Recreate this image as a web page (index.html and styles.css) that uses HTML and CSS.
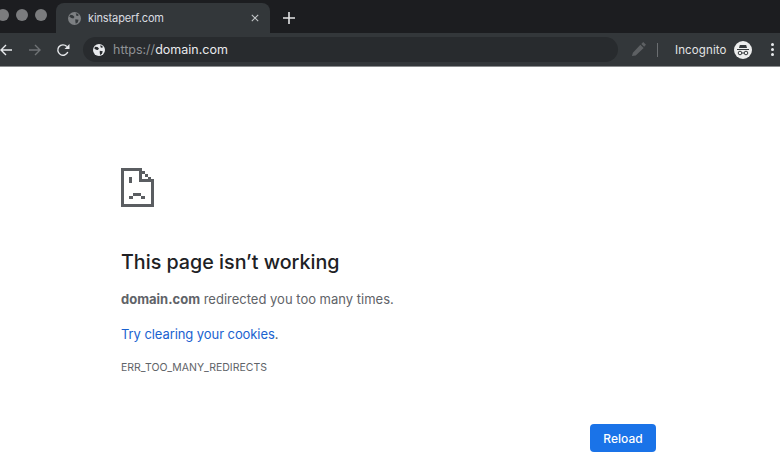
FILE: index.html
```html
<!DOCTYPE html>
<html lang="en">
<head>
    <meta charset="UTF-8">
    <title>This page isn't working</title>
    <link rel="stylesheet" href="styles.css">
</head>
<body>
    <div class="tabstrip">
        <div class="lights">
            <span class="light"></span>
            <span class="light"></span>
            <span class="light"></span>
        </div>
        <div class="tab">
            <svg class="tab-globe" viewBox="0 0 16 16">
                <circle cx="8" cy="8" r="8" fill="#7d8083"/>
                <path d="M3 3.500l3 .5 2 2-1.500 2-2.500-.5-2.500-2zM9 9l4 .5-1 3.500-2.500 1.500-.5-3z" fill="#35393c"/>
                <path d="M9.500 1.500l3 1 .5 2-2.500.5z" fill="#35393c"/>
            </svg>
            <span class="tab-title">kinstaperf.com</span>
            <svg class="tab-close" viewBox="0 0 10 10">
                <path d="M1 1l8 8M9 1l-8 8" stroke="#c4c7c9" stroke-width="1.300"/>
            </svg>
        </div>
        <svg class="new-tab" viewBox="0 0 12 12">
            <path d="M6 0v12M0 6h12" stroke="#e3e4e5" stroke-width="1.600"/>
        </svg>
    </div>

    <div class="toolbar">
        <svg class="nav nav-back" viewBox="0 0 12 12">
            <path d="M12 6H1M6 1L1 6l5 5" fill="none" stroke="#e8eaed" stroke-width="1.400"/>
        </svg>
        <svg class="nav nav-forward" viewBox="0 0 12 12">
            <path d="M0 6h11M6 1l5 5-5 5" fill="none" stroke="#6f7275" stroke-width="1.400"/>
        </svg>
        <svg class="nav nav-reload" viewBox="0 0 14 14">
            <path d="M11.800 9A5.200 5.200 0 1 1 10.800 3.500" fill="none" stroke="#e8eaed" stroke-width="1.400"/>
            <path d="M8.500 6h5V1z" fill="#e8eaed"/>
        </svg>
        <div class="omnibox">
            <svg class="omni-globe" viewBox="0 0 16 16">
                <circle cx="8" cy="8" r="8" fill="#e8eaed"/>
                <path d="M3 3.500l3 .5 2 2-1.500 2-2.500-.5-2.500-2zM9 9l4 .5-1 3.500-2.500 1.500-.5-3z" fill="#282b2e"/>
                <path d="M9.500 1.500l3 1 .5 2-2.500.5z" fill="#282b2e"/>
            </svg>
            <span class="url"><span class="url-scheme">https://</span>domain.com</span>
        </div>
        <svg class="ext" viewBox="0 0 16 16">
            <path d="M1 15l1-3.500L10 3l3.500 3.500L5 14.500zM11 2l2-2 3 3-2 2z" fill="#5d6063"/>
        </svg>
        <span class="divider"></span>
        <span class="incognito">Incognito</span>
        <svg class="incognito-icon" viewBox="0 0 18 18">
            <circle cx="9" cy="9" r="9" fill="#eceded"/>
            <path d="M5.800 4h6.400l.8 3H5z" fill="#35393c"/>
            <path d="M3 8h12v1H3z" fill="#35393c"/>
            <circle cx="6" cy="12" r="1.800" fill="none" stroke="#35393c"/>
            <circle cx="12" cy="12" r="1.800" fill="none" stroke="#35393c"/>
            <path d="M7.800 12h2.400" stroke="#35393c"/>
        </svg>
        <div class="menu">
            <span class="menu-dot"></span>
            <span class="menu-dot"></span>
            <span class="menu-dot"></span>
        </div>
    </div>

    <main class="page">
        <svg class="sad-file" viewBox="0 0 33 39" shape-rendering="crispEdges">
            <path d="M0 0h21v3H3v33h27V12h3v27H0z" fill="#5a5d61"/>
            <path d="M18 3h3v8h12v3H18z" fill="#5a5d61"/>
            <path d="M21 3h3v3h-3zM24 6h3v3h-3zM27 9h3v2h-3z" fill="#5a5d61"/>
            <path d="M8 9h3v6H8z" fill="#5a5d61"/>
            <path d="M8 28h4v3H8zM12 25h8v3h-8zM20 28h4v3h-4z" fill="#5a5d61"/>
        </svg>
        <h1 class="title">This page isn’t working</h1>
        <p class="summary"><strong>domain.com</strong> redirected you too many times.</p>
        <p class="suggestion"><a href="#">Try clearing your cookies</a>.</p>
        <div class="error-code">ERR_TOO_MANY_REDIRECTS</div>
        <div class="actions">
            <button class="reload">Reload</button>
        </div>
    </main>
</body>
</html>
```

FILE: styles.css
```css
html, body {
    margin: 0;
    height: 100%;
    overflow: hidden;
}

body {
    font-family: 'Inter', 'Liberation Sans', sans-serif;
    background-color: #ffffff;
    color: #5f6368;
}

.tabstrip {
    display: flex;
    align-items: flex-end;
    height: 33px;
    background-color: #1c1d20;
}

.lights {
    display: flex;
    gap: 7px;
    width: 56px;
    margin-left: -3px;
    margin-right: 3px;
    align-self: flex-start;
    padding-top: 9px;
}

.light {
    width: 12px;
    height: 12px;
    border-radius: 50%;
    background-color: #7b7c7e;
}

.tab {
    display: flex;
    align-items: center;
    width: 214px;
    height: 30px;
    box-sizing: border-box;
    padding: 0 10px 0 12px;
    background-color: #33373a;
    border-radius: 8px 8px 0 0;
}

.tab-globe {
    width: 13px;
    height: 13px;
    margin-right: 7px;
}

.tab-title {
    flex: 1;
    font-size: 11px;
    letter-spacing: -0.01em;
    color: #dadce0;
}

.tab-close {
    width: 8px;
    height: 8px;
    margin-right: 1px;
}

.new-tab {
    width: 12px;
    height: 12px;
    margin: 0 0 9px 13px;
}

.toolbar {
    display: flex;
    align-items: center;
    height: 33px;
    background-color: #33373a;
    border-bottom: 1px solid #8a8c8e;
}

.nav {
    width: 12px;
    height: 12px;
    flex: none;
}

.nav-forward {
    margin-left: 17px;
}

.nav-reload {
    width: 14px;
    height: 14px;
    margin-left: 15px;
}

.omnibox {
    display: flex;
    align-items: center;
    width: 535px;
    height: 25px;
    margin-left: 13px;
    box-sizing: border-box;
    padding-left: 10px;
    background-color: #282b2e;
    border-radius: 13px;
}

.omni-globe {
    width: 12px;
    height: 12px;
    margin-right: 8px;
}

.url {
    font-size: 12.5px;
    color: #e8eaed;
}

.url-scheme {
    color: #8f9295;
}

.ext {
    width: 15px;
    height: 15px;
    margin-left: 13px;
}

.divider {
    width: 1px;
    height: 14px;
    margin-left: 11px;
    background-color: #6b6e71;
}

.incognito {
    margin-left: 17px;
    font-size: 11.5px;
    letter-spacing: 0.01em;
    color: #e3e4e5;
}

.incognito-icon {
    width: 18px;
    height: 18px;
    margin-left: 7px;
}

.menu {
    display: flex;
    flex-direction: column;
    gap: 2px;
    margin-left: 19px;
}

.menu-dot {
    width: 3px;
    height: 3px;
    border-radius: 50%;
    background-color: #e8eaed;
}

.page {
    padding: 101px 124px 0 121px;
}

.sad-file {
    display: block;
    width: 33px;
    height: 39px;
}

.title {
    margin: 41px 0 0;
    font-size: 19.7px;
    line-height: 28px;
    font-weight: 500;
    color: #202124;
}

.summary {
    margin: 13px 0 0;
    font-size: 13px;
    line-height: 20px;
}

.suggestion {
    margin: 15px 0 0;
    font-size: 13px;
    line-height: 20px;
    letter-spacing: -0.006em;
}

.suggestion a {
    color: #1a62d0;
    text-decoration: none;
}

.error-code {
    margin-top: 17px;
    font-size: 10.5px;
    line-height: 14px;
}

.actions {
    display: flex;
    justify-content: flex-end;
    margin-top: 49px;
}

.reload {
    width: 66px;
    height: 28px;
    padding: 0;
    border: none;
    border-radius: 4px;
    background-color: #1a73e8;
    color: #ffffff;
    font-family: inherit;
    font-size: 12px;
    font-weight: 500;
}
```
